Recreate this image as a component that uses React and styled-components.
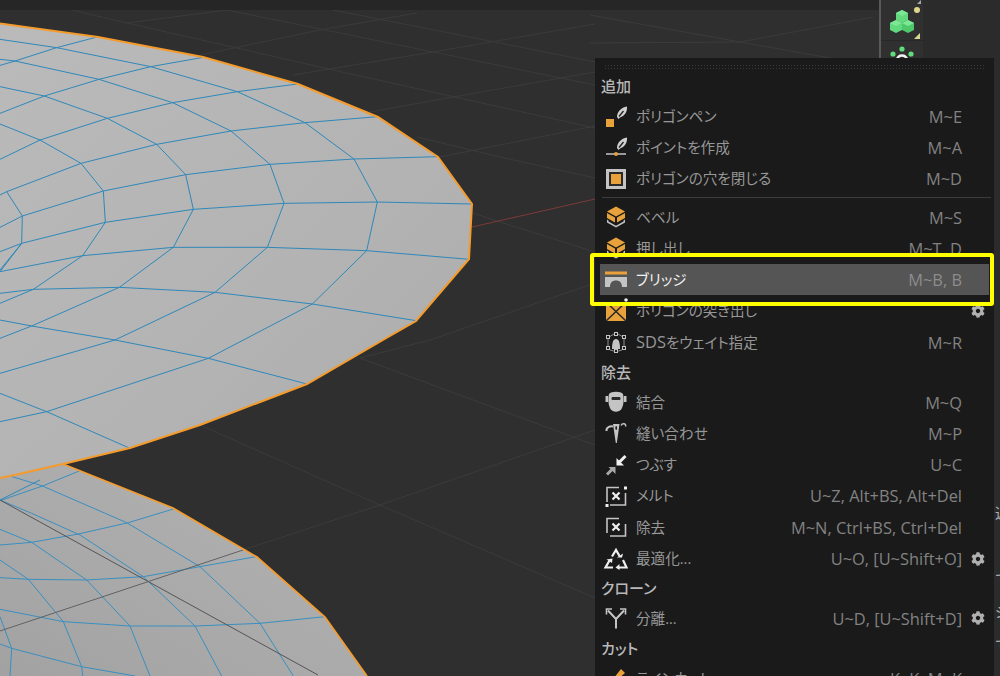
import React from 'react';
import styled, { createGlobalStyle } from 'styled-components';
import { FaCog } from 'react-icons/fa';

const GlobalStyle = createGlobalStyle`
  html, body {
    margin: 0;
    padding: 0;
    background: #2b2b2b;
  }
`;

const Page = styled.div`
  position: relative;
  width: 1000px;
  height: 676px;
  overflow: hidden;
  display: flex;
  flex-direction: row;
  font-family: "Open Sans", "Noto Sans CJK JP", sans-serif;
`;

const Viewport = styled.div`
  width: 879px;
  flex-shrink: 0;
  display: flex;
  flex-direction: column;
  background: #2f2f2f;
`;

const TopBand = styled.div`
  height: 10px;
  background: #262626;
`;

const Scene = styled.svg`
  display: block;
  width: 879px;
  height: 666px;
`;

const Toolbar = styled.div`
  width: 42px;
  flex-shrink: 0;
  display: flex;
  flex-direction: column;
  background: #303030;
  border-left: 2px solid #595959;
`;

const ToolCell = styled.div`
  position: relative;
  height: ${props => props.h}px;
  box-sizing: border-box;
  padding-top: ${props => props.top}px;
  display: flex;
  justify-content: center;
  align-items: flex-start;
  border-bottom: 1px solid #282828;
`;

const TopMark = styled.div`
  position: absolute;
  right: 2px;
  top: 0;
  width: 0;
  height: 0;
  border-left: 4px solid transparent;
  border-bottom: 4px solid #a8a8a8;
`;

const StatusDot = styled.div`
  position: absolute;
  right: 3px;
  top: 7px;
  width: 6px;
  height: 6px;
  border-radius: 50%;
  background: #dcd68a;
`;

const CornerMark = styled.div`
  position: absolute;
  right: 3px;
  bottom: 1px;
  width: 0;
  height: 0;
  border-left: 6px solid transparent;
  border-bottom: 6px solid #d8d890;
`;

const SidePanel = styled.div`
  flex: 1;
  display: flex;
  flex-direction: column;
  padding: 503px 0 0 72px;
  overflow: hidden;
  background: #2b2b2b;
`;

const SideText = styled.div`
  height: 33px;
  font-size: 14px;
  line-height: 20px;
  color: #b4b4b4;
  white-space: nowrap;
`;

const Menu = styled.div`
  position: absolute;
  left: 595px;
  top: 58px;
  width: 399px;
  height: 640px;
  background: #1a1a1a;
  display: flex;
  flex-direction: column;
`;

const Handle = styled.div`
  height: 6px;
  margin: 6px 8px 2px 9px;
  background-image: radial-gradient(circle, #3a3a3a 0.8px, transparent 1px);
  background-size: 3px 3px;
`;

const Section = styled.div`
  height: 28.5px;
  line-height: 28.5px;
  padding-left: 6px;
  font-size: 15px;
  font-weight: 500;
  color: #b8b8b8;
  font-feature-settings: "palt";
`;

const Row = styled.div`
  height: 31.3px;
  margin: 0 5px;
  padding-left: 4px;
  display: flex;
  flex-direction: row;
  align-items: center;
  flex-shrink: 0;
  background: ${props => props.active ? '#555555' : 'transparent'};
`;

const IconBox = styled.svg`
  display: block;
  width: 24px;
  height: 24px;
  flex-shrink: 0;
  overflow: visible;
`;

const Label = styled.span`
  margin-left: 8px;
  padding-bottom: 2px;
  flex: 1;
  font-size: 14.6px;
  color: ${props => props.active ? '#f2f2f2' : '#979797'};
  font-feature-settings: "palt";
  white-space: nowrap;
`;

const Latin = styled.span`
  font-size: 16.4px;
`;

const Shortcut = styled.span`
  font-size: 16.4px;
  color: ${props => props.active ? '#8c8c8c' : '#828282'};
  white-space: nowrap;
`;

const GearSlot = styled.span`
  width: 27px;
  display: flex;
  justify-content: flex-end;
  padding-right: 4px;
  box-sizing: border-box;
  color: #b0b0b0;
  font-size: 14px;
`;

const Divider = styled.div`
  height: 7px;
  display: flex;
  align-items: center;
  margin: 0 3px 0 7px;

  &:after {
    content: "";
    flex: 1;
    height: 1px;
    background: #3c3c3c;
  }
`;

const Callout = styled.div`
  position: absolute;
  left: 590px;
  top: 253px;
  width: 404px;
  height: 53px;
  box-sizing: border-box;
  border: 4.5px solid #ffff00;
  border-radius: 3px;
`;

const ORANGE = '#e9a23b';
const GREY = '#c4c4c4';
const WHITE = '#f0f0f0';
const DARK = '#1f1f1f';

// scene points are written as read off the 3x crops
const z4 = (pts) => pts.map(([x, y]) => `${x / 3},${y / 3}`).join(' ');
const z5 = (pts) => pts.map(([x, y]) => `${x / 3},${y / 3 + 340}`).join(' ');

const GRID_LINES = [
  '72,10 127,23 333,70 500,107 595,128',
  '127,23 227,10',
  '200,55 320,30 417,13',
  '293,75 433,52 595,24',
  '370,112 453,97 595,72',
  '440,157 500,145 595,126',
  '227,10 433,52 595,85',
  '333,10 500,43 595,62',
  '417,137 500,157 595,178',
  '473,213 500,222 595,252',
  '590,15 740,42 830,58 879,67',
  '590,43 740,42 873,17',
  '360,358 500,410 595,445',
  '360,358 430,340 595,283',
  '200,425 380,505 595,598',
  '243,550 380,505 595,430',
];

const UPPER_SPOKES = [
  [[295, 110], [170, 143], [45, 183], [-30, 205]],
  [[610, 172], [452, 200], [297, 238], [133, 288], [0, 340]],
  [[893, 252], [712, 275], [518, 308], [322, 355], [120, 420], [0, 478]],
  [[1133, 350], [915, 368], [693, 393], [470, 433], [243, 490], [20, 575], [0, 585]],
  [[1315, 470], [1062, 477], [810, 493], [557, 524], [310, 573], [67, 648], [0, 682]],
  [[1415, 612], [1132, 606], [852, 610], [580, 628], [316, 667], [65, 730], [0, 755]],
  [[1408, 778], [1100, 752], [802, 742], [520, 742], [248, 767], [0, 815]],
  [[1248, 962], [937, 912], [645, 877], [358, 862], [100, 868], [0, 880]],
  [[921, 1152], [625, 1075], [345, 1020], [95, 978], [0, 960]],
  [[390, 1345], [140, 1235], [0, 1180]],
  [[120, 1440], [0, 1500]],
  [[65, 730], [0, 810]],
];

const UPPER_RINGS = [
  [[0, 118], [170, 143], [452, 200], [712, 275], [915, 368], [1062, 477], [1132, 606], [1100, 752], [937, 912], [625, 1075], [140, 1235], [0, 1265]],
  [[0, 178], [45, 183], [297, 238], [518, 308], [693, 393], [810, 493], [852, 610], [802, 742], [645, 877], [345, 1020], [0, 1120]],
  [[0, 260], [133, 288], [322, 355], [470, 433], [557, 524], [580, 628], [520, 742], [358, 862], [95, 978], [0, 1015]],
  [[0, 372], [120, 420], [243, 490], [310, 573], [316, 667], [248, 767], [100, 868], [0, 910]],
  [[20, 575], [67, 648], [65, 730], [0, 815]],
];

const LOWER_LINES = [
  [[30, 408], [125, 437], [380, 548], [600, 680], [780, 850], [880, 1008]],
  [[0, 480], [95, 520], [240, 585], [430, 710], [585, 858], [665, 1008]],
  [[0, 568], [95, 607], [260, 720], [390, 858], [450, 1008]],
  [[0, 660], [85, 718], [190, 845], [245, 980], [248, 1008]],
  [[0, 830], [35, 925], [30, 1008]],
  [[520, 507], [385, 548], [235, 582], [95, 607], [0, 615]],
  [[768, 650], [600, 680], [430, 710], [260, 720], [85, 718], [0, 713]],
  [[975, 830], [780, 850], [585, 858], [390, 858], [190, 845], [0, 808]],
  [[245, 980], [35, 925], [0, 912]],
  [[245, 980], [405, 1008]],
  [[240, 392], [130, 437], [0, 482]],
];

const UPPER_RIM = '0,23.5 98,37 203,57 298,84 378,117 438,157 472,204 469,259 416,321 383,340 307,384 200,425 130,448 63,464 10,476 0,478';
const LOWER_RIM = '63,464 173,508 257,557 325,617 367,676';

const Nib = () => (
  <>
    <path d="M13 13 C13 8 17 3.500 23 2.500 C23.500 8 20.500 12 16 13.500 L14.500 15 Z" fill="#d0d0d0" />
    <path d="M15 12.500 L19.500 7" stroke={DARK} strokeWidth="1.300" />
  </>
);

const Cube = () => (
  <>
    <path d="M12 1.500 L21 6.500 L12 11.500 L3 6.500 Z" fill={ORANGE} />
    <path d="M3 8 L11 12.500 L11 17.500 L3 13 Z" fill={ORANGE} />
    <path d="M21 8 L13 12.500 L13 17.500 L21 13 Z" fill={ORANGE} />
    <path d="M3 14.500 V17.500 L12 22.500 L21 17.500 V14.500 L19.500 15.400 V16.600 L12 20.700 L4.500 16.600 V15.400 Z" fill={GREY} />
  </>
);

const XBox = ({ dots }) => (
  <>
    <path d="M15 3.500 H3 V18" stroke={GREY} strokeWidth="1.600" fill="none" />
    <path d="M21.500 9 V21 H6" stroke={GREY} strokeWidth="1.600" fill="none" />
    <path d="M8.500 8.500 L15.500 15.500 M15.500 8.500 L8.500 15.500" stroke={WHITE} strokeWidth="2.200" />
    {dots && <rect x="20" y="2.500" width="3" height="3" fill={WHITE} />}
    {dots && <rect x="1.500" y="20" width="3" height="3" fill={WHITE} />}
  </>
);

const ICONS = {
  pen: (
    <>
      <rect x="2" y="15" width="8" height="8" fill={ORANGE} />
      <Nib />
    </>
  ),
  point: (
    <>
      <Nib />
      <path d="M2 19 H22" stroke={GREY} strokeWidth="1.500" />
      <circle cx="12" cy="19" r="2" fill={ORANGE} />
    </>
  ),
  close: (
    <>
      <rect x="2" y="2" width="20" height="20" fill={GREY} />
      <rect x="5" y="5" width="14" height="14" fill="#2a2a2a" />
      <rect x="7" y="7" width="10" height="10" fill={ORANGE} />
    </>
  ),
  bevel: <Cube />,
  extrude: <Cube />,
  bridge: (
    <>
      <rect x="1" y="3.500" width="22" height="3" fill={ORANGE} />
      <path d="M1 9 H23 V19 H18 C18 14.500 15.500 12.500 12 12.500 C8.500 12.500 6 14.500 6 19 H1 Z" fill={GREY} />
    </>
  ),
  inner: (
    <>
      <circle cx="22" cy="1" r="1.800" fill={WHITE} />
      <rect x="2" y="3" width="20" height="19" fill={ORANGE} />
      <path d="M2 3 L22 22 M22 3 L2 22" stroke="#2a2a2a" strokeWidth="1.600" />
    </>
  ),
  sds: (
    <>
      <path d="M10 4 L5 7 M14 4 L19 7 M4 9 V16 M20 9 V16 M6 20 L10 21 M18 20 L14 21" stroke="#8d8d8d" strokeWidth="1" fill="none" />
      <path d="M8 19 C8 13 9 9 12 9 C15 9 16 13 16 19 Z" fill={GREY} />
      <rect x="10.500" y="2.500" width="3" height="3" fill="none" stroke={GREY} />
      <rect x="2.500" y="5.500" width="3" height="3" fill="none" stroke={GREY} />
      <rect x="18.500" y="5.500" width="3" height="3" fill="none" stroke={GREY} />
      <rect x="2.500" y="16.500" width="3" height="3" fill="none" stroke={GREY} />
      <rect x="18.500" y="16.500" width="3" height="3" fill="none" stroke={GREY} />
      <rect x="10.500" y="19.500" width="3" height="3" fill="none" stroke={GREY} />
    </>
  ),
  merge: (
    <>
      <path d="M5 4 C7 1 17 1 19 4 C20 8 20 14 18 18 C16 23 8 23 6 18 C4 14 4 8 5 4 Z" fill={GREY} />
      <rect x="7.500" y="7" width="9" height="3" rx="1" fill="#2a2a2a" />
      <rect x="1.500" y="6" width="2.500" height="6" fill={GREY} />
      <rect x="20" y="6" width="2.500" height="6" fill={GREY} />
    </>
  ),
  stitch: (
    <>
      <path d="M2.500 10 C2 6 6 5 9 5.500" stroke={GREY} strokeWidth="2" fill="none" />
      <path d="M9 3 H15.500 L12.800 22 H11.800 Z" fill={GREY} />
      <path d="M17 4.500 C18.500 1.500 22.500 2.500 21.500 5.500" stroke={GREY} strokeWidth="1.500" fill="none" />
      <ellipse cx="12.200" cy="7" rx="0.900" ry="2" fill={DARK} />
    </>
  ),
  collapse: (
    <>
      <path d="M21.500 3 L15.500 9" stroke={WHITE} strokeWidth="3" />
      <path d="M12.500 5 V12.500 H20 Z" fill={WHITE} />
      <path d="M3 21.500 L8.500 16" stroke="#a8a8a8" strokeWidth="3" />
      <path d="M11.500 14 V21 L4.500 14 Z" fill="#a8a8a8" />
    </>
  ),
  melt: <XBox dots />,
  dissolve: <XBox />,
  optimize: (
    <>
      <path d="M8 9.500 L12 3 L15.500 9" stroke={WHITE} strokeWidth="2.200" fill="none" />
      <path d="M13 9.500 L18 9.500 L19 5.500 Z" fill={WHITE} transform="translate(0 1)" />
      <path d="M19 13 L22.500 20.500 H15" stroke={WHITE} strokeWidth="2.200" fill="none" />
      <path d="M15.500 17 V23 L11.500 20.500 Z" fill={WHITE} />
      <path d="M9 20.500 H1.500 L5.500 13.500" stroke={WHITE} strokeWidth="2.200" fill="none" />
      <path d="M2.500 12.500 L8.500 11.500 L8 16 Z" fill={WHITE} />
    </>
  ),
  split: (
    <>
      <path d="M12 12.500 V22.500" stroke={GREY} strokeWidth="2" />
      <path d="M12 13 L4 4.500 M12 13 L20 4.500" stroke={GREY} strokeWidth="2" fill="none" />
      <path d="M2.500 8.500 V3 H8 M16 3 H21.500 V8.500" stroke={GREY} strokeWidth="1.600" fill="none" />
    </>
  ),
  cut: (
    <>
      <path d="M17 3 L21 7 L14 13 L11.500 10 Z" fill={ORANGE} />
      <path d="M11 11 L13.500 14 L5 21 Z" fill={GREY} />
    </>
  ),
};

const MENU_ITEMS = [
  { section: '追加' },
  { icon: 'pen', label: 'ポリゴンペン', keys: 'M~E' },
  { icon: 'point', label: 'ポイントを作成', keys: 'M~A' },
  { icon: 'close', label: 'ポリゴンの穴を閉じる', keys: 'M~D' },
  { divider: true },
  { icon: 'bevel', label: 'ベベル', keys: 'M~S' },
  { icon: 'extrude', label: '押し出し', keys: 'M~T, D' },
  { icon: 'bridge', label: 'ブリッジ', keys: 'M~B, B', active: true },
  { icon: 'inner', label: 'ポリゴンの突き出し', gear: true },
  { icon: 'sds', label: <><Latin>SDS</Latin>をウェイト指定</>, keys: 'M~R' },
  { section: '除去' },
  { icon: 'merge', label: '結合', keys: 'M~Q' },
  { icon: 'stitch', label: '縫い合わせ', keys: 'M~P' },
  { icon: 'collapse', label: 'つぶす', keys: 'U~C' },
  { icon: 'melt', label: 'メルト', keys: 'U~Z, Alt+BS, Alt+Del' },
  { icon: 'dissolve', label: '除去', keys: 'M~N, Ctrl+BS, Ctrl+Del' },
  { icon: 'optimize', label: '最適化...', keys: 'U~O, [U~Shift+O]', gear: true },
  { section: 'クローン' },
  { icon: 'split', label: '分離...', keys: 'U~D, [U~Shift+D]', gear: true },
  { section: 'カット' },
  { icon: 'cut', label: 'ラインカット', keys: 'K~K, M~K' },
];

const SIDE_TEXTS = ['込', '「', 'で', 'ジ', 'で'];

const SceneView = () => (
  <Scene viewBox="0 10 879 666">
    <defs>
      <linearGradient id="upperFill" x1="0" y1="0" x2="1" y2="1">
        <stop offset="0" stopColor="#bababa" />
        <stop offset="0.6" stopColor="#b3b3b3" />
        <stop offset="1" stopColor="#ababab" />
      </linearGradient>
      <linearGradient id="lowerFill" x1="1" y1="0" x2="0" y2="1">
        <stop offset="0" stopColor="#b4b4b4" />
        <stop offset="1" stopColor="#a2a2a2" />
      </linearGradient>
    </defs>
    {GRID_LINES.map((pts) => (
      <polyline key={pts} points={pts} fill="none" stroke="#3b3b3b" strokeWidth="1" />
    ))}
    <line x1="472" y1="227" x2="595" y2="199" stroke="#7d3a3a" strokeWidth="1" />
    <polygon points={`${LOWER_RIM} 0,676 0,478`} fill="url(#lowerFill)" />
    <polygon points={UPPER_RIM} fill="url(#upperFill)" />
    {LOWER_LINES.map((pts, i) => (
      <polyline key={i} points={z5(pts)} fill="none" stroke="#3a8fc0" strokeWidth="1" />
    ))}
    <line x1="0" y1="500" x2="318" y2="675" stroke="#555555" strokeWidth="1" />
    <line x1="0" y1="631" x2="243" y2="550" stroke="#626262" strokeWidth="1" />
    {UPPER_SPOKES.concat(UPPER_RINGS).map((pts, i) => (
      <polyline key={i} points={z4(pts)} fill="none" stroke="#2f88b9" strokeWidth="1" />
    ))}
    <polyline points={UPPER_RIM} fill="none" stroke="#f59b2b" strokeWidth="2" />
    <polyline points={LOWER_RIM} fill="none" stroke="#f59b2b" strokeWidth="1.700" />
  </Scene>
);

const CubesIcon = () => (
  <svg width="26" height="26" viewBox="0 0 26 26">
    <path d="M13 1 L19 4 L19 11 L13 14 L7 11 L7 4 Z" fill="#62d97d" />
    <path d="M7 4 L13 7 L19 4 L13 1 Z" fill="#7ce896" />
    <path d="M7 11 L13 14 L13 21 L7 24 L1 21 L1 14 Z" fill="#62d97d" />
    <path d="M1 14 L7 17 L13 14 L7 11 Z" fill="#7ce896" />
    <path d="M19 11 L25 14 L25 21 L19 24 L13 21 L13 14 Z" fill="#4fc86c" />
    <path d="M13 14 L19 17 L25 14 L19 11 Z" fill="#7ce896" />
  </svg>
);

const NodesIcon = () => (
  <svg width="24" height="14" viewBox="0 0 24 14">
    <path d="M7 14 C8 8 16 8 17 14" fill="none" stroke="#f2f2f2" strokeWidth="2.500" />
    <circle cx="12" cy="3" r="2.600" fill="#5fdc7c" />
    <circle cx="3" cy="8" r="2.600" fill="#5fdc7c" />
    <circle cx="21" cy="8" r="2.600" fill="#5fdc7c" />
  </svg>
);

const MenuRow = ({ item }) => (
  <Row active={item.active}>
    <IconBox viewBox="0 0 24 24">{ICONS[item.icon]}</IconBox>
    <Label active={item.active}>{item.label}</Label>
    {item.keys && <Shortcut active={item.active}>{item.keys}</Shortcut>}
    <GearSlot>{item.gear && <FaCog />}</GearSlot>
  </Row>
);

const App = () => (
  <Page>
    <GlobalStyle />
    <Viewport>
      <TopBand />
      <SceneView />
    </Viewport>
    <Toolbar>
      <ToolCell h={41} top={9}>
        <TopMark />
        <StatusDot />
        <CubesIcon />
        <CornerMark />
      </ToolCell>
      <ToolCell h={20} top={5}>
        <NodesIcon />
      </ToolCell>
    </Toolbar>
    <SidePanel>
      {SIDE_TEXTS.map((text, i) => (
        <SideText key={i}>{text}</SideText>
      ))}
    </SidePanel>
    <Menu>
      <Handle />
      {MENU_ITEMS.map((item, i) => {
        if (item.section) return <Section key={i}>{item.section}</Section>;
        if (item.divider) return <Divider key={i} />;
        return <MenuRow key={i} item={item} />;
      })}
    </Menu>
    <Callout />
  </Page>
);

export default App;
